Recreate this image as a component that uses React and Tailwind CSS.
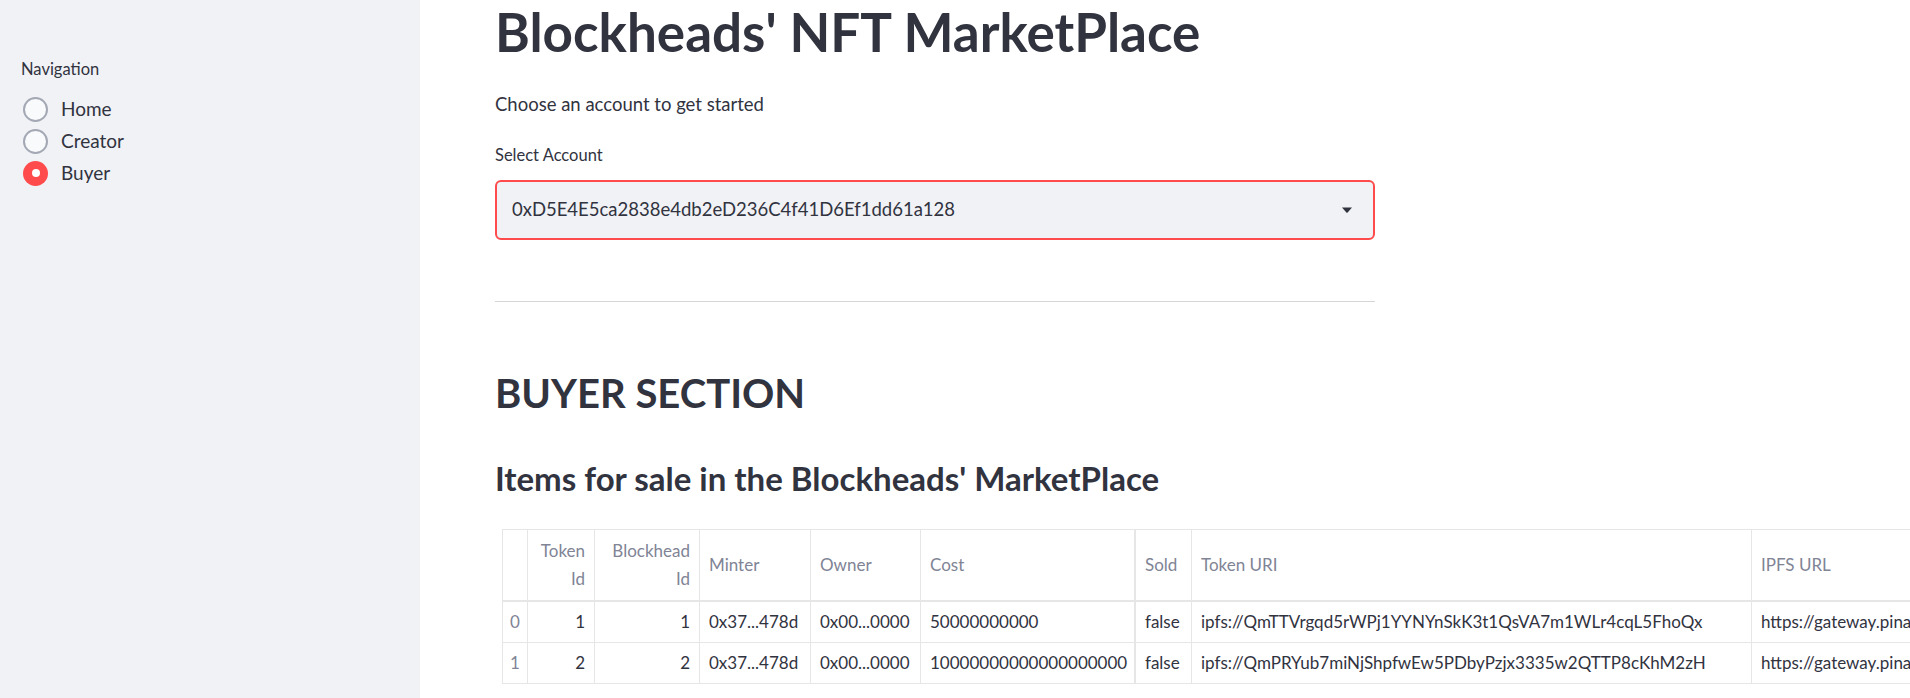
import React from 'react';

const columns = [
  { label: [''], w: 'w-[25px]', align: 'center' },
  { label: ['Token', 'Id'], w: 'w-[67px]', align: 'right' },
  { label: ['Blockhead', 'Id'], w: 'w-[105px]', align: 'right' },
  { label: ['Minter'], w: 'w-[111px]', align: 'left' },
  { label: ['Owner'], w: 'w-[110px]', align: 'left' },
  { label: ['Cost'], w: 'w-[215px]', align: 'left', thick: true },
  { label: ['Sold'], w: 'w-[56px]', align: 'left' },
  { label: ['Token URI'], w: 'w-[560px]', align: 'left' },
  { label: ['IPFS URL'], w: 'w-[720px]', align: 'left' },
];

const rows = [
  [
    '0', '1', '1', '0x37...478d', '0x00...0000', '50000000000', 'false',
    'ipfs://QmTTVrgqd5rWPj1YYNYnSkK3t1QsVA7m1WLr4cqL5FhoQx',
    'https://gateway.pinata.cloud/ipfs/QmTTVrgqd5rWPj1YYNYnSkK3t1QsVA7m1WLr4cqL5FhoQx',
  ],
  [
    '1', '2', '2', '0x37...478d', '0x00...0000', '10000000000000000000', 'false',
    'ipfs://QmPRYub7miNjShpfwEw5PDbyPzjx3335w2QTTP8cKhM2zH',
    'https://gateway.pinata.cloud/ipfs/QmPRYub7miNjShpfwEw5PDbyPzjx3335w2QTTP8cKhM2zH',
  ],
];

const pages = ['Home', 'Creator', 'Buyer'];

function Radio({ label, checked }) {
  return (
    <div className="flex items-center h-[32px]">
      {checked ? (
        <div className="w-[25px] h-[25px] rounded-full bg-[#ff4b4b] flex items-center justify-center">
          <div className="w-[8px] h-[8px] rounded-full bg-white" />
        </div>
      ) : (
        <div className="w-[25px] h-[25px] rounded-full border-[2.5px] border-[#a3a8b4] bg-[#f9fafb]" />
      )}
      <span className="ml-[13px] text-[19px] text-[#31333f]">{label}</span>
    </div>
  );
}

function alignClass(a) {
  if (a === 'right') return 'justify-end text-right';
  if (a === 'center') return 'justify-center text-center';
  return 'justify-start text-left';
}

export default function App() {
  return (
    <div className="flex w-[1910px] h-[698px] overflow-hidden bg-white font-[Lato,sans-serif] text-[#31333f]">
      {/* Sidebar */}
      <aside className="w-[420px] shrink-0 bg-[#f0f2f6] pt-[55px] pl-[21px]">
        <div className="text-[16.5px] leading-[28px]">Navigation</div>
        <div className="mt-[10px] pl-[2px]">
          {pages.map((p) => (
            <Radio key={p} label={p} checked={p === 'Buyer'} />
          ))}
        </div>
      </aside>

      {/* Main */}
      <main className="flex-1 pl-[75px]">
        <div className="w-[880px]">
          <h1 className="text-[53px] leading-[64px] font-bold">Blockheads' NFT MarketPlace</h1>
          <p className="mt-[26px] text-[18.5px] leading-[28px]">Choose an account to get started</p>

          <div className="mt-[25px] text-[16.5px] leading-[24px]">Select Account</div>
          <div className="mt-[13px] h-[60px] rounded-[6px] border-2 border-[#ff4b4b] bg-[#f0f2f6] flex items-center justify-between pl-[15px] pr-[21px]">
            <span className="text-[18.5px]">0xD5E4E5ca2838e4db2eD236C4f41D6Ef1dd61a128</span>
            <svg width="10" height="6" viewBox="0 0 10 6">
              <path d="M0 0.5 H10 L5.6 5.4 Q5 6 4.4 5.4 Z" fill="#31333f" />
            </svg>
          </div>

          <hr className="mt-[61px] border-0 border-t border-[#d6d6d9]" />

          <h2 className="mt-[66px] text-[40px] leading-[50px] font-bold">BUYER SECTION</h2>
          <h3 className="mt-[40px] text-[33px] leading-[40px] font-bold">Items for sale in the Blockheads' MarketPlace</h3>
        </div>

        {/* Table */}
        <div className="mt-[31px] ml-[7px] w-max border-l border-t border-[#e6e6e6]">
          <div className="flex h-[72px] border-b-2 border-[#e6e6e6]">
            {columns.map((c, i) => (
              <div
                key={i}
                className={`${c.w} shrink-0 flex items-center px-[9px] ${alignClass(c.align)} ${c.thick ? 'border-r-2' : 'border-r'} border-[#e6e6e6] text-[#808495] text-[17px] leading-[28px]`}
              >
                <div>
                  {c.label.map((l, j) => (
                    <div key={j}>{l}</div>
                  ))}
                </div>
              </div>
            ))}
          </div>
          {rows.map((r, ri) => (
            <div key={ri} className="flex h-[41px] border-b border-[#e6e6e6]">
              {r.map((v, ci) => (
                <div
                  key={ci}
                  className={`${columns[ci].w} shrink-0 flex items-center px-[9px] whitespace-nowrap overflow-hidden ${alignClass(columns[ci].align)} ${columns[ci].thick ? 'border-r-2' : 'border-r'} border-[#e6e6e6] text-[17px] ${ci === 0 ? 'text-[#808495]' : 'text-[#31333f]'}`}
                >
                  {v}
                </div>
              ))}
            </div>
          ))}
        </div>
      </main>
    </div>
  );
}
